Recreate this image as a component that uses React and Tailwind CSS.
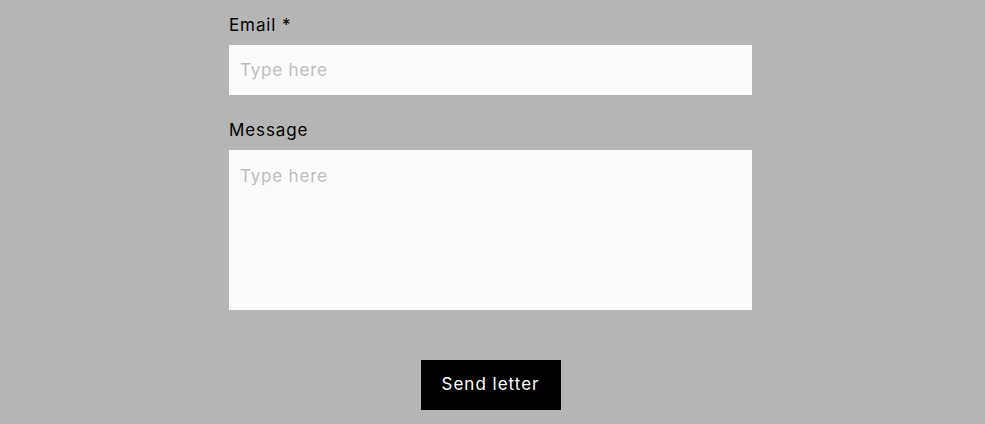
import React from 'react';

export default function App() {
    return (
        <div className="min-h-[424px] bg-[#b5b5b5] font-['Inter',sans-serif] text-black tracking-[0.9px]">
            <form className="ml-[229px] w-[523px] pt-[13px] flex flex-col" onSubmit={(e) => e.preventDefault()}>
                {/* Email */}
                <label className="text-[17px] leading-[24px] mb-[8px]">Email *</label>
                <input
                    type="email"
                    placeholder="Type here"
                    className="h-[50px] bg-[#fbfbfb] px-[11px] text-[17px] tracking-[0.8px] outline-none placeholder:text-[#bdbdbd]"
                />

                {/* Message */}
                <label className="text-[17px] leading-[24px] mt-[23px] mb-[8px]">Message</label>
                <textarea
                    placeholder="Type here"
                    className="h-[160px] resize-none bg-[#fbfbfb] px-[11px] pt-[14px] pb-[12px] text-[17px] leading-[24px] tracking-[0.8px] outline-none placeholder:text-[#bdbdbd]"
                />

                <div className="flex justify-center mt-[50px]">
                    <button type="submit" className="w-[140px] h-[50px] bg-black text-white text-[17px] tracking-[1px]">
                        Send letter
                    </button>
                </div>
            </form>
        </div>
    );
}
